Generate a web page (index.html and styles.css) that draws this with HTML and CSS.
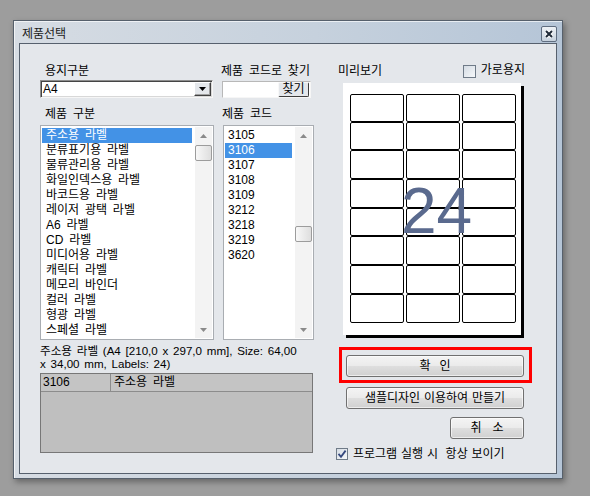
FILE: index.html
```html
<!DOCTYPE html>
<html lang="ko">
<head>
<meta charset="utf-8">
<title>제품선택</title>
<link rel="stylesheet" href="styles.css">
</head>
<body>
<div class="window">
  <div class="titlebar">
    <span class="title">제품선택</span>
    <span class="close"><svg width="12" height="12" viewBox="0 0 12 12"><path d="M3 3 L9 9 M9 3 L3 9" stroke="#ffffff" stroke-width="4"/><path d="M3 3 L9 9 M9 3 L3 9" stroke="#1f2a38" stroke-width="2"/></svg></span>
  </div>
  <div class="client">
    <div class="leftcol">
      <div class="grid">
        <div class="lbl ind">용지구분</div>
        <div class="lbl c2a">제품 코드로 찾기</div>
        <div class="combo"><span class="combo-text">A4</span><span class="combo-btn"><svg width="7" height="4" viewBox="0 0 7 4"><path d="M0 0H7L3.5 4Z" fill="#000"/></svg></span></div>
        <div class="search"><span class="search-btn">찾기</span></div>
        <div class="lbl ind r3">제품 구분</div>
        <div class="lbl c2b r3">제품 코드</div>
        <div class="list">
          <ul class="items">
            <li class="sel">주소용 라벨</li>
            <li>분류표기용 라벨</li>
            <li>물류관리용 라벨</li>
            <li>화일인덱스용 라벨</li>
            <li>바코드용 라벨</li>
            <li>레이저 광택 라벨</li>
            <li>A6 라벨</li>
            <li>CD 라벨</li>
            <li>미디어용 라벨</li>
            <li>캐릭터 라벨</li>
            <li>메모리 바인더</li>
            <li>컬러 라벨</li>
            <li>형광 라벨</li>
            <li>스페셜 라벨</li>
          </ul>
          <div class="vscroll">
            <span class="arr"><svg width="7" height="4" viewBox="0 0 7 4"><path d="M3.5 0L7 4H0Z" fill="#8a8a8a"/></svg></span>
            <span class="track"><span class="thumb"></span></span>
            <span class="arr"><svg width="7" height="4" viewBox="0 0 7 4"><path d="M0 0H7L3.5 4Z" fill="#8a8a8a"/></svg></span>
          </div>
        </div>
        <div class="list list2">
          <ul class="items">
            <li>3105</li>
            <li class="sel">3106</li>
            <li>3107</li>
            <li>3108</li>
            <li>3109</li>
            <li>3212</li>
            <li>3218</li>
            <li>3219</li>
            <li>3620</li>
          </ul>
          <div class="vscroll">
            <span class="arr"><svg width="7" height="4" viewBox="0 0 7 4"><path d="M3.5 0L7 4H0Z" fill="#8a8a8a"/></svg></span>
            <span class="track"><span class="thumb low"></span></span>
            <span class="arr"><svg width="7" height="4" viewBox="0 0 7 4"><path d="M0 0H7L3.5 4Z" fill="#8a8a8a"/></svg></span>
          </div>
        </div>
      </div>
      <div class="desc">주소용 라벨 (A4 [210,0 x 297,0 mm], Size: 64,00<br>x 34,00 mm, Labels: 24)</div>
      <div class="table">
        <div class="thead"><span class="c1">3106</span><span class="c2">주소용 라벨</span></div>
      </div>
    </div>
    <div class="rightcol">
      <div class="rhead">
        <span class="lbl">미리보기</span>
        <span class="chk"><span class="box"></span>가로용지</span>
      </div>
      <div class="preview">
        <div class="cells">
          <span></span><span></span><span></span>
          <span></span><span></span><span></span>
          <span></span><span></span><span></span>
          <span></span><span></span><span></span>
          <span></span><span></span><span></span>
          <span></span><span></span><span></span>
          <span></span><span></span><span></span>
          <span></span><span></span><span></span>
        </div>
        <span class="count">24</span>
      </div>
      <div class="focus"><button class="btn wide spaced">확 인</button></div>
      <button class="btn wide second">샘플디자인 이용하여 만들기</button>
      <button class="btn cancel">취 소</button>
      <div class="always"><span class="box small"><svg width="10" height="10" viewBox="0 0 10 10"><path d="M1.5 4.8 L4 7.8 L8.6 1.6" fill="none" stroke="#34487e" stroke-width="1.8"/></svg></span><span class="always-text">프로그램 실행 시  항상 보이기</span></div>
    </div>
  </div>
</div>
</body>
</html>
```

FILE: styles.css
```css
* { box-sizing: border-box; }
html, body { margin: 0; padding: 0; }
body {
  width: 590px;
  height: 496px;
  overflow: hidden;
  background: #9d9d9d;
  padding: 20px 0 0 13px;
  font-family: "Liberation Sans", "Noto Sans CJK KR", sans-serif;
  font-size: 12px;
  line-height: 14px;
  word-spacing: 2.5px;
  color: #000;
}
.window {
  width: 550px;
  height: 459px;
  border: 1px solid #56606c;
  padding: 0 5px 4px 5px;
  background: linear-gradient(90deg, #d6dce3 0%, #c6d1dd 55%, #b5c5d7 100%);
  box-shadow: 2px 3px 6px rgba(0, 0, 0, 0.35), inset 1px 1px 0 rgba(255, 255, 255, 0.65);
  display: flex;
  flex-direction: column;
}
.titlebar {
  height: 22px;
  display: flex;
  justify-content: space-between;
  align-items: flex-start;
}
.title {
  margin-top: 6px;
  padding-left: 3px;
  color: #1b1b1b;
  word-spacing: 0;
}
.close {
  width: 16px;
  height: 16px;
  margin-top: 5px;
  border: 1px solid #5f6d80;
  border-radius: 2px;
  background: linear-gradient(#eef2f6, #c6d1dd);
  display: flex;
  align-items: center;
  justify-content: center;
}
.client {
  flex: 1;
  border: 1px solid #56606d;
  background: #e4e7eb;
  display: flex;
  gap: 25px;
  padding: 19px 0 0 20px;
}
.leftcol { width: 273px; }
.grid {
  display: grid;
  grid-template-columns: 174px 91px;
  column-gap: 9px;
}
.lbl { height: 14px; padding-top: 1px; white-space: nowrap; }
.ind { padding-left: 5px; }
.c2a { margin-left: -2px; }
.c2b { margin-left: -1px; }
.r3 { margin-top: 8px; }
.combo {
  margin-top: 3px;
  width: 173px;
  height: 18px;
  background: #fff;
  border: 1px solid;
  border-color: #8d8d8d #f6f6f6 #f6f6f6 #8d8d8d;
  box-shadow: inset 1px 1px 0 #454545, inset -1px -1px 0 #d8d8d8;
  display: flex;
  align-items: center;
}
.combo-text { flex: 1; padding-left: 2px; }
.combo-btn {
  width: 17px;
  height: 14px;
  margin-right: 1px;
  background: #e4e7eb;
  border: 1px solid;
  border-color: #fff #404040 #404040 #fff;
  box-shadow: inset -1px -1px 0 #a0a0a0;
  display: flex;
  align-items: center;
  justify-content: center;
}
.search {
  margin-top: 4px;
  margin-left: -1px;
  width: 89px;
  height: 17px;
  background: #fff;
  border: 1px solid;
  border-color: #b8b8b8 #f6f6f6 #f6f6f6 #b8b8b8;
  display: flex;
  justify-content: flex-end;
  align-items: center;
  padding-right: 1px;
}
.search-btn {
  width: 31px;
  height: 15px;
  border: 1px solid;
  border-color: #f8f8f8 #3c3c3c #3c3c3c #f8f8f8;
  border-radius: 2px;
  background: #e4e7eb;
  line-height: 13px;
  text-align: center;
  word-spacing: 0;
}
.list {
  margin-top: 5px;
  height: 215px;
  border: 1px solid #a9adb2;
  padding: 1px;
  background: #fff;
  display: flex;
}
.items {
  flex: 1;
  list-style: none;
  margin: 0 3px 0 0;
  padding: 1px 0 0 0;
}
.items li {
  height: 15px;
  line-height: 15px;
  padding-left: 4px;
  white-space: nowrap;
}
.list2 .items li { padding-left: 3px; }
.items li.sel { background: #4392e6; color: #fff; }
.vscroll {
  width: 17px;
  display: flex;
  flex-direction: column;
  background: #f3f3f3;
}
.arr {
  height: 17px;
  display: flex;
  align-items: center;
  justify-content: center;
}
.track { flex: 1; }
.thumb {
  display: block;
  width: 17px;
  height: 16px;
  margin-top: 1px;
  border: 1px solid #9c9c9c;
  border-radius: 2px;
  background: linear-gradient(90deg, #f8f8f8, #dedede);
}
.thumb.low { margin-top: 82px; }
.desc {
  margin-top: 4px;
  font-size: 11.6px;
  line-height: 13px;
  white-space: nowrap;
  word-spacing: 1.5px;
}
.table {
  margin-top: 3px;
  height: 80px;
  border: 1px solid #777;
  background: #bfbfbf;
}
.thead {
  display: flex;
  height: 18px;
  line-height: 17px;
  background: #c4c4c4;
  border-bottom: 1px solid #8c8c8c;
}
.thead .c1 { width: 70px; padding-left: 2px; border-right: 1px solid #8c8c8c; }
.thead .c2 { padding-left: 3px; }
.rightcol {
  width: 194px;
  display: flex;
  flex-direction: column;
  align-items: flex-start;
}
.rhead {
  width: 187px;
  height: 14px;
  display: flex;
  justify-content: space-between;
}
.chk { display: flex; align-items: flex-start; gap: 5px; white-space: nowrap; }
.box {
  width: 13px;
  height: 13px;
  margin-top: 2px;
  border: 1px solid #6f7b88;
  background: linear-gradient(135deg, #d5dce4, #f6f8fa);
  display: flex;
  align-items: center;
  justify-content: center;
}
.preview {
  position: relative;
  margin: 6px 0 0 5px;
  width: 178px;
  height: 252px;
  background: #fff;
  box-shadow: 3px 3px 0 #000;
  padding: 11px 0 0 7px;
}
.cells {
  display: grid;
  grid-template-columns: repeat(3, 54px);
  column-gap: 2px;
  grid-template-rows: 28px 28px 29px 29px 28px 29px 29px 29px;
}
.cells span { border: 1px solid #000; border-radius: 2px; }
.count {
  position: absolute;
  left: 58px;
  top: 96px;
  font-family: "Liberation Sans", sans-serif;
  font-size: 64px;
  line-height: 1;
  color: #5a6a8e;
}
.focus {
  margin: 12px 0 0 1px;
  width: 193px;
  height: 36px;
  border: 3px solid #ff0000;
  padding: 5px 0 0 4px;
}
.btn {
  font: inherit;
  height: 22px;
  padding: 0;
  border: 1px solid #707070;
  border-radius: 3px;
  background: linear-gradient(#f4f4f4 0%, #ebebeb 48%, #dedede 52%, #d0d0d0 100%);
  box-shadow: inset 0 0 0 1px rgba(255, 255, 255, 0.6);
  color: #000;
  line-height: 20px;
  text-align: center;
  white-space: nowrap;
  word-spacing: 0.5px;
}
.btn.wide { width: 178px; }
.btn.spaced { word-spacing: 5.5px; }
.btn.second { margin: 4px 0 0 8px; }
.btn.cancel { width: 74px; margin: 8px 0 0 112px; word-spacing: 7.5px; }
.always {
  margin: 9px 0 0 -2px;
  display: flex;
  align-items: flex-start;
  gap: 5px;
}
.box.small { width: 12px; height: 12px; margin-top: 0; }
.always-text { white-space: pre; word-spacing: 0.5px; margin-top: -1px; }
```
